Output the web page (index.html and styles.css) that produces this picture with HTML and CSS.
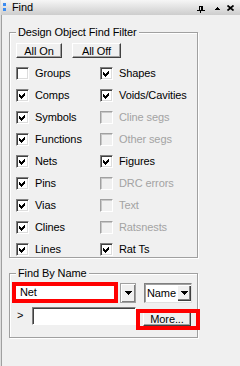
FILE: index.html
```html
<!DOCTYPE html>
<html lang="en">
<head>
    <meta charset="UTF-8">
    <meta name="viewport" content="width=device-width, initial-scale=1.0">
    <title>Find</title>
    <link rel="stylesheet" href="styles.css">
</head>
<body>
    <div class="panel">
        <div class="titlebar">
            <svg class="grip" width="3" height="8" viewBox="0 0 3 8"><rect x="0" y="0" width="3" height="3" fill="#3d8cf0"/><rect x="0" y="5" width="3" height="3" fill="#3d8cf0"/></svg>
            <span class="title">Find</span>
            <div class="tools">
                <svg class="pin" width="8" height="7" viewBox="0 0 8 7" shape-rendering="crispEdges"><rect x="2" y="0" width="4" height="1"/><rect x="2" y="0" width="1" height="4"/><rect x="4" y="0" width="2" height="4"/><rect x="0" y="4" width="8" height="1"/><rect x="3" y="5" width="1" height="2"/></svg>
                <svg class="up" width="5" height="3" viewBox="0 0 5 3" shape-rendering="crispEdges"><path d="M2 0h1v1h1v1h1v1H0V2h1V1h1z"/></svg>
                <svg class="close" width="7" height="6" viewBox="0 0 7 6"><path d="M0.5 0.5L6.5 5.5M6.5 0.5L0.5 5.5" stroke="#000" stroke-width="1.7"/></svg>
            </div>
        </div>
        <div class="content">
            <fieldset class="group filter">
                <legend>Design Object Find Filter</legend>
                <div class="btnrow">
                    <button class="btn all-on">All On</button>
                    <button class="btn all-off">All Off</button>
                </div>
                <div class="checks">
                    <label class="check"><span class="box"></span>Groups</label>
                    <label class="check"><span class="box on"></span>Shapes</label>
                    <label class="check"><span class="box on"></span>Comps</label>
                    <label class="check"><span class="box on"></span>Voids/Cavities</label>
                    <label class="check"><span class="box on"></span>Symbols</label>
                    <label class="check dis"><span class="box"></span>Cline segs</label>
                    <label class="check"><span class="box on"></span>Functions</label>
                    <label class="check dis"><span class="box"></span>Other segs</label>
                    <label class="check"><span class="box on"></span>Nets</label>
                    <label class="check"><span class="box on"></span>Figures</label>
                    <label class="check"><span class="box on"></span>Pins</label>
                    <label class="check dis"><span class="box"></span>DRC errors</label>
                    <label class="check"><span class="box on"></span>Vias</label>
                    <label class="check dis"><span class="box"></span>Text</label>
                    <label class="check"><span class="box on"></span>Clines</label>
                    <label class="check dis"><span class="box"></span>Ratsnests</label>
                    <label class="check"><span class="box on"></span>Lines</label>
                    <label class="check"><span class="box on"></span>Rat Ts</label>
                </div>
            </fieldset>

            <fieldset class="group byname">
                <legend>Find By Name</legend>
                <div class="row">
                    <div class="mark net">Net</div>
                    <span class="dd"><svg width="7" height="4" viewBox="0 0 7 4" shape-rendering="crispEdges"><path d="M0 0h7v1H6v1H5v1H4v1H3V3H2V2H1V1H0z"/></svg></span>
                    <div class="combo">
                        <span class="val">Name</span>
                        <span class="dd small"><svg width="7" height="4" viewBox="0 0 7 4" shape-rendering="crispEdges"><path d="M0 0h7v1H6v1H5v1H4v1H3V3H2V2H1V1H0z"/></svg></span>
                    </div>
                </div>
                <div class="row second">
                    <span class="chev">&gt;</span>
                    <span class="field"></span>
                    <div class="mark more"><button class="btn more-btn">More...</button></div>
                </div>
            </fieldset>
        </div>
    </div>

    <script>
        // tick marks for the checked boxes
        document.querySelectorAll('.box.on').forEach(function (box) {
            box.innerHTML = '<svg width="11" height="11" viewBox="0 0 11 11" shape-rendering="crispEdges"><polygon points="2,4 4,6 8,2 8,5 4,9 2,7" fill="#000"/></svg>';
        });
    </script>
</body>
</html>
```

FILE: styles.css
```css
* {
    box-sizing: border-box;
}
body {
    margin: 0;
    font-family: "Liberation Sans", Arial, sans-serif;
    font-size: 11px;
    letter-spacing: -0.1px;
    color: #000;
    background: #f0f0f0;
}
.panel {
    width: 240px;
    height: 366px;
    background: #f0f0f0;
    border-left: 1px solid #dedede;
}
.titlebar {
    height: 15px;
    display: flex;
    align-items: center;
    padding-left: 2px;
    background: linear-gradient(#f6f6f6, #cdcdcd);
}
.grip {
    display: block;
    margin-top: -2px;
}
.title {
    margin-left: 6px;
    line-height: 15px;
}
.tools {
    margin-left: auto;
    display: flex;
    align-items: center;
    margin-right: 6px;
    padding-top: 3px;
}
.tools svg {
    display: block;
}
.up {
    margin-left: 10px;
    margin-top: -2px;
}
.close {
    margin-left: 7px;
    margin-top: -2px;
}
.content {
    height: 351px;
    border-left: 1px solid #a0a0a0;
    padding: 11px 0 0 7px;
}
.group {
    margin: 0;
    width: 189px;
    min-width: 0;
    border: 1px solid #a0a0a0;
    box-shadow: inset 1px 1px #fff, 1px 1px #fff;
}
.group legend {
    padding: 0 2px;
    line-height: 12px;
    background: #f0f0f0;
}
.filter {
    padding: 5px 0 1px 6px;
}
.btnrow {
    display: flex;
    gap: 10px;
}
.btn {
    height: 15px;
    padding: 0;
    font: inherit;
    letter-spacing: inherit;
    color: #000;
    background: #f0f0f0;
    border: 1px solid;
    border-color: #fff #404040 #404040 #fff;
    box-shadow: inset -1px -1px #a0a0a0;
}
.all-on {
    width: 46px;
}
.all-off {
    width: 49px;
}
.checks {
    display: grid;
    grid-template-columns: 84px 1fr;
    grid-auto-rows: 13px;
    row-gap: 9px;
    margin-top: 9px;
}
.check {
    display: flex;
    align-items: center;
    gap: 6px;
    line-height: 13px;
    white-space: nowrap;
}
.box {
    flex: none;
    width: 13px;
    height: 13px;
    border: 1px solid;
    border-color: #808080 #fff #fff #808080;
    box-shadow: inset 1px 1px #404040, inset -1px -1px #dcdcdc;
    background: #fff;
}
.box svg {
    display: block;
}
.dis {
    color: #a3a3a3;
}
.dis .box {
    background: #f0f0f0;
    border-color: #a0a0a0 #fff #fff #a0a0a0;
    box-shadow: inset 1px 1px #c8c8c8;
}
.byname {
    margin-top: 9px;
    padding: 3px 0 7px 2px;
}
.byname legend {
    margin-left: 4px;
}
.row {
    display: flex;
    align-items: flex-start;
}
.mark {
    flex: none;
    border: 4px solid #f00;
}
.net {
    width: 106px;
    height: 21px;
    padding-left: 4px;
    line-height: 13px;
    background: #fff;
}
.dd {
    flex: none;
    width: 16px;
    height: 20px;
    margin: 1px 0 0 2px;
    display: flex;
    align-items: center;
    justify-content: center;
    background: #f0f0f0;
    border: 1px solid #a0a0a0;
    box-shadow: inset 1px 1px #fff, inset -1px -1px #808080;
}
.combo {
    flex: none;
    width: 48px;
    height: 20px;
    margin: 1px 0 0 8px;
    display: flex;
    align-items: center;
    padding-left: 2px;
    background: #fff;
    border: 1px solid;
    border-color: #808080 #e0e0e0 #e0e0e0 #808080;
    box-shadow: inset 1px 1px #a0a0a0;
}
.combo .val {
    flex: 1;
}
.dd.small {
    width: 14px;
    height: 16px;
    margin: 0;
    border: none;
    box-shadow: inset 1px 1px #fff, inset -1px -1px #404040, inset -2px -2px #808080;
}
.second {
    margin-top: 4px;
}
.chev {
    flex: none;
    width: 20px;
    padding-left: 5px;
    line-height: 17px;
}
.field {
    flex: none;
    width: 104px;
    height: 18px;
    background: #fff;
    border: 1px solid;
    border-color: #808080 #fff #fff #808080;
    box-shadow: inset 1px 1px #404040;
}
.more {
    width: 64px;
    height: 21px;
    margin-top: 2px;
    padding-left: 3px;
    display: flex;
}
.more-btn {
    width: 48px;
    height: 13px;
    line-height: 11px;
    border-top: none;
}
```
